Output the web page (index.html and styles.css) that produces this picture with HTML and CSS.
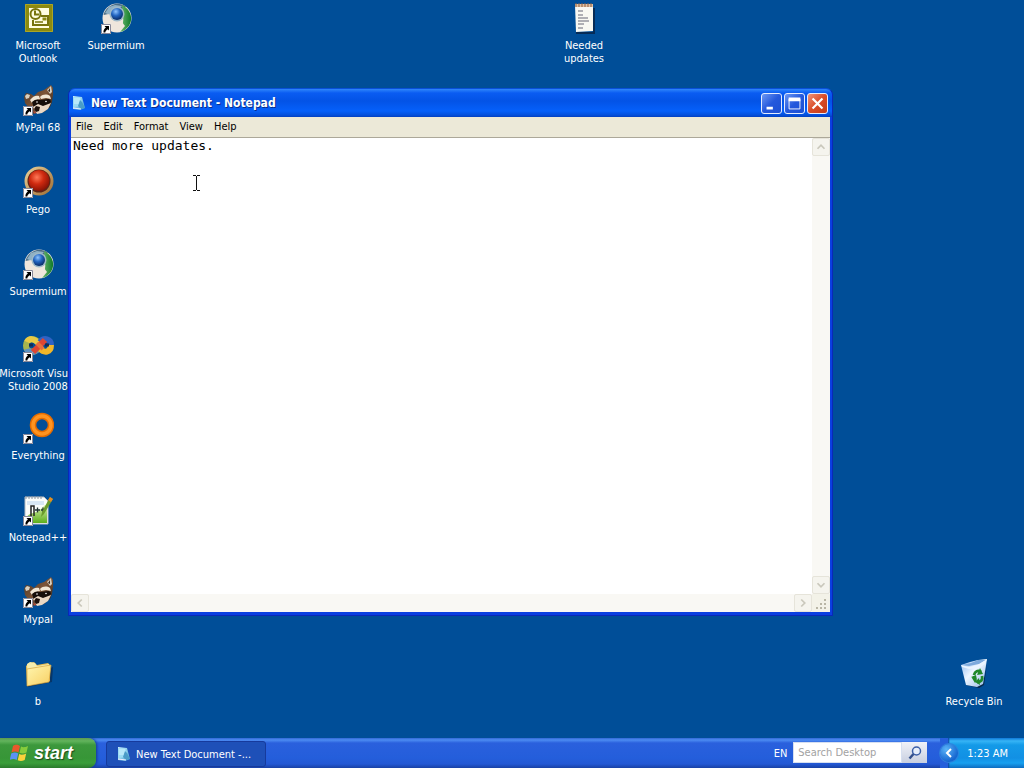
FILE: index.html
```html
<!DOCTYPE html>
<html lang="en">
<head>
<meta charset="utf-8">
<title>Desktop</title>
<link rel="stylesheet" href="styles.css">
</head>
<body>
<svg class="defs" aria-hidden="true">
  <defs>
    <radialGradient id="globe" cx=".4" cy=".3" r=".7"><stop offset="0" stop-color="#8fc4ff"/><stop offset=".5" stop-color="#2264c0"/><stop offset="1" stop-color="#0a2c68"/></radialGradient>
    <radialGradient id="red" cx=".4" cy=".35" r=".65"><stop offset="0" stop-color="#ff7a58"/><stop offset=".5" stop-color="#d02a10"/><stop offset="1" stop-color="#8c1406"/></radialGradient>
    <linearGradient id="gold" x2="1" y2="1"><stop offset="0" stop-color="#ecd49c"/><stop offset="1" stop-color="#9c6a30"/></linearGradient>
    <linearGradient id="green" x2="1"><stop offset="0" stop-color="#7cc47c"/><stop offset="1" stop-color="#0f7a28"/></linearGradient>
    <linearGradient id="folder" x2="1" y2="1"><stop offset="0" stop-color="#fff6b0"/><stop offset="1" stop-color="#f8cf62"/></linearGradient>
    <linearGradient id="bin" x2="1" y2="1"><stop offset="0" stop-color="#86b4ee"/><stop offset=".45" stop-color="#eef6ff"/><stop offset="1" stop-color="#8fb6e4"/></linearGradient>
    <linearGradient id="grass" x2="0" y2="1"><stop offset="0" stop-color="#e4f4b4"/><stop offset="1" stop-color="#5cae1c"/></linearGradient>
    <linearGradient id="note" x2="1" y2="1"><stop offset="0" stop-color="#d4f4ff"/><stop offset="1" stop-color="#3da0d4"/></linearGradient>
    <linearGradient id="fur" x2="1" y2="1"><stop offset="0" stop-color="#4a3424"/><stop offset=".5" stop-color="#7c5538"/><stop offset="1" stop-color="#24170f"/></linearGradient>
  </defs>
  <symbol id="shortcut" viewBox="0 0 10 10"><path d="M0 0h10v10H0z" fill="#fff"/><path d="M.5.5h9v9h-9z" fill="none" stroke="#889"/><path d="M3.500 2H8v4.500L6.700 5.200C5.200 6 4.500 7 4.300 8.500H2.500C2.200 6.500 3.200 4.800 4.900 3.500z"/></symbol>
  <symbol id="i-outlook" viewBox="0 0 32 32">
    <path d="M3 2h28v28H3z" fill="#8c8a10"/><path d="M7 6h20v20H7z" fill="#fffde0"/><path d="M3.500 2.500h27v27h-27z" fill="none" stroke="#aaa524"/>
    <g fill="none" stroke="#77740c" stroke-width="2"><circle cx="13.500" cy="12" r="5"/><path d="M13 8.500v4h4"/><path d="M19 14h7v9H11v-5"/></g><path d="M20.500 15.500h4v3h-4z" fill="#8c8a10"/><path d="M13 20h8" stroke="#77740c" stroke-width="1.500"/>
  </symbol>
  <symbol id="i-supermium" viewBox="0 0 32 32">
    <circle cx="17" cy="16" r="14.500" fill="#efe6de"/><path d="M3.500 13A14.500 14.500 0 0 1 26 4.500L18 10z" fill="#4a6c84"/><path d="M5 11l4-6 6-2 7 1-5 5-7 4z" fill="#8fb0c4"/>
    <path d="M22 3C32 8 34 19 27 26c-3 3-6 4-9 4 4-5 6-9 5-15z" fill="url(#green)"/><path d="M3 17c3-6 12-6 16-1l6 8-5 6C10 31 3 25 3 17z" fill="#efe6dc"/>
    <circle cx="17" cy="12" r="7.500" fill="#9db8c8"/><circle cx="17" cy="12" r="6" fill="url(#globe)"/>
  </symbol>
  <symbol id="i-raccoon" viewBox="0 0 32 32">
    <path d="M2 13l2-4 5 1 3 2 4-4 6-2 7-5 2 3v7l-1 7-2 5-6 5-7 1-5 1-4-7-3-4z" fill="url(#fur)"/>
    <path d="M3 12l2-2 3 1-1 3-3 1zM25 6l4-4 1 6-2 2z" fill="#d8d0c0"/><path d="M26 7l2-3v4z" fill="#3a2a1e"/>
    <path d="M8 16c3-4 6-5 9-4l1 3-4 1-4 3zM18 13c3-3 7-3 10-1l1 3-5-1-5 1z" fill="#f1e6d4"/>
    <path d="M10 18c3-3 6-3 8-2l9-1 2 2-2 4-6 1-4 1-5 1z" fill="#160e0a"/>
    <path d="M11 23l5-3 5 2 8-3-3 6-6 4-5 1z" fill="#ead8c4"/><path d="M14 22l4 1-1 4-3 1-2-3z" fill="#1c100c"/><path d="M11 27l3 1-1 2z" fill="#c04c3c"/><circle cx="15" cy="18" r=".8" fill="#fff"/><circle cx="24" cy="17.500" r=".8" fill="#fff"/>
  </symbol>
  <symbol id="i-pego" viewBox="0 0 32 32"><circle cx="17" cy="15" r="14.500" fill="url(#gold)"/><circle cx="17" cy="15" r="11.500" fill="#5d2417"/><circle cx="17" cy="14.500" r="10.500" fill="url(#red)"/></symbol>
  <symbol id="i-vs" viewBox="0 0 32 32">
    <g fill="none" stroke-width="6" transform="translate(0 3)"><path d="M17 10C12 4 4 6 4 12.500S12 21 17 15" stroke="#a7b54e"/><path d="M5 9c2-4 7-4 11 1" stroke="#e8ca45"/><path d="M5 16c1 4 7 4 11 0" stroke="#5d92c0"/><path d="M18 9C22 4 29 6 29 12" stroke="#2f62c4"/><path d="M29 12C29 20 22 20 18 16" stroke="#f1b72a"/><path d="M11 19L23 7" stroke="#dc4634"/><path d="M15 10l6 6" stroke="#e8703c" stroke-width="4"/></g>
    <path d="M7 15h4M23 15h4" stroke="#142a54" stroke-width="3"/>
  </symbol>
  <symbol id="i-every" viewBox="0 0 32 32"><circle cx="20" cy="13" r="9" fill="none" stroke="#e56c00" stroke-width="6.500"/><circle cx="20" cy="13" r="9" fill="none" stroke="#ff9420" stroke-width="3.500"/></symbol>
  <symbol id="i-npp" viewBox="0 0 32 32">
    <path d="M3 3h19l4 4v23H3z" fill="#fbfdfb" stroke="#b4bcc4"/><path d="M4 2v3m3-3v3m3-3v3m3-3v3m3-3v3m3-3v3" stroke="#8a94a0"/><path d="M5 8h17M5 10h17" stroke="#b8d2ee"/><path d="M4 24c4-6 7-4 12-7s6-6 9-7v19H4z" fill="url(#grass)"/>
    <path d="M9 22V12h3v10" fill="none" stroke="#222" stroke-width="1.500"/><path d="M13 16h5m-2.500-2.500v5M19 16h4m-2-2.500v5" stroke="#233" stroke-width="1.300"/><path d="M28 3l3 2-9 15-3 3 1-5z" fill="#6b9c2c"/><path d="M28 3l3 2-2 3-3-2z" fill="#e58a24"/>
  </symbol>
  <symbol id="i-folder" viewBox="0 0 32 32"><path d="M6 29l24-5 1-15-3 1v13L5 28z" fill="#092c55" opacity=".7"/><path d="M4 8l3-3 5-1 3 3 11-2 2 2v16L5 28z" fill="#e5bb54"/><path d="M5 6l3-2 5 1 2 3 12-2v16L6 27z" fill="#f4edad"/><path d="M5 11l24-4-2 17-22 4z" fill="url(#folder)" stroke="#d5a33d" stroke-width=".7"/></symbol>
  <symbol id="i-text" viewBox="0 0 32 32"><path d="M8 31h18V6" fill="none" stroke="#062b56" stroke-width="2"/><path d="M7 3l18-1v27L8 30z" fill="#f8f8f2"/><path d="M7 2h18v3H7z" fill="#dfc0a4"/><path d="M8 1v4m3-4v4m3-4v4m3-4v4m3-4v4m3-4v4" stroke="#8f6040"/><path d="M10 9h5m-5 4h5m-5 3h10m-10 3h11m-11 3h6m-6 4h5" stroke="#667"/></symbol>
  <symbol id="i-bin" viewBox="0 0 32 32"><path d="M8 27l13 3 5-3 3-21-4 20z" fill="#06284d"/><path d="M3 7l9-3 8-2 9-1-4 25-6 3-11-2z" fill="url(#bin)"/><path d="M4 7l9-2 7-3 8 0-7 4-10 2z" fill="#7da9dc"/><path d="M3 7l8 2 9-2 9-6-2 5-6 4-10 1-7-2z" fill="#eaf4ff"/><g fill="none" stroke="#20882a" stroke-width="2.800"><path d="M16 17c1-4 4-5 7-3M24 18c1 4-1 6-5 6M15 19l3 5"/></g><path d="M22 10l3 6-6 1zM13 19l5-2 1 5zM21 20l-4 4 5 3z" fill="#20882a"/></symbol>
  <symbol id="i-note" viewBox="0 0 16 16"><path d="M2 1l9 1 3 11-5 2-7-1z" fill="url(#note)"/><path d="M2 2l8 1 1 8-9 1z" fill="#9bdcf4"/><path d="M3 4h6M3 6h6M3 8h5" stroke="#d4f4ff"/><path d="M9 5l2 2 3 6-4 1-3-3z" fill="#4a9cc8"/><path d="M2 13l8 1" stroke="#eef"/></symbol>
</svg>

<div class="screen">
  <main class="desktop">
    <div class="icons">
      <button class="icon"><span class="art"><svg class="pic"><use href="#i-outlook"/></svg></span><span>Microsoft<br>Outlook</span></button>
      <button class="icon col-2"><span class="art"><svg class="pic"><use href="#i-supermium"/></svg><svg class="arrow"><use href="#shortcut"/></svg></span><span>Supermium</span></button>
      <button class="icon col-8"><span class="art"><svg class="pic"><use href="#i-text"/></svg></span><span>Needed<br>updates</span></button>
      <button class="icon row-2"><span class="art"><svg class="pic"><use href="#i-raccoon"/></svg><svg class="arrow"><use href="#shortcut"/></svg></span><span>MyPal 68</span></button>
      <button class="icon row-3"><span class="art"><svg class="pic"><use href="#i-pego"/></svg><svg class="arrow"><use href="#shortcut"/></svg></span><span>Pego</span></button>
      <button class="icon row-4"><span class="art"><svg class="pic"><use href="#i-supermium"/></svg><svg class="arrow"><use href="#shortcut"/></svg></span><span>Supermium</span></button>
      <button class="icon row-5"><span class="art"><svg class="pic"><use href="#i-vs"/></svg><svg class="arrow"><use href="#shortcut"/></svg></span><span>Microsoft Visual<br>Studio 2008</span></button>
      <button class="icon row-6"><span class="art"><svg class="pic"><use href="#i-every"/></svg><svg class="arrow"><use href="#shortcut"/></svg></span><span>Everything</span></button>
      <button class="icon row-7"><span class="art"><svg class="pic"><use href="#i-npp"/></svg><svg class="arrow"><use href="#shortcut"/></svg></span><span>Notepad++</span></button>
      <button class="icon row-8"><span class="art"><svg class="pic"><use href="#i-raccoon"/></svg><svg class="arrow"><use href="#shortcut"/></svg></span><span>Mypal</span></button>
      <button class="icon row-9"><span class="art"><svg class="pic"><use href="#i-folder"/></svg></span><span>b</span></button>
      <button class="icon row-9 col-13"><span class="art"><svg class="pic"><use href="#i-bin"/></svg></span><span>Recycle Bin</span></button>
    </div>

    <section class="window" aria-label="Notepad">
      <header class="titlebar">
        <svg class="small-icon"><use href="#i-note"/></svg>
        <h1 class="title">New Text Document - Notepad</h1>
        <button class="caption" aria-label="Minimize"><svg viewBox="0 0 21 21"><path d="M5 14h7v3H5z" fill="#fff"/></svg></button>
        <button class="caption" aria-label="Maximize"><svg viewBox="0 0 21 21"><path d="M4.500 5.500h12v11h-12z" fill="none" stroke="#fff"/><path d="M4 4h13v4H4z" fill="#fff"/></svg></button>
        <button class="caption close" aria-label="Close"><svg viewBox="0 0 21 21"><path d="M5 5l11 11m0-11L5 16" stroke="#fff" stroke-width="2.400"/></svg></button>
      </header>
      <div class="frame">
        <nav class="menubar"><button>File</button><button>Edit</button><button>Format</button><button>View</button><button>Help</button></nav>
        <div class="editor">
          <textarea class="text" aria-label="Document text" spellcheck="false">Need more updates.</textarea>
          <div class="vscroll">
            <button aria-label="Scroll up"><svg viewBox="0 0 16 16"><path d="M4 10l4-4 4 4"/></svg></button>
            <button aria-label="Scroll down"><svg viewBox="0 0 16 16"><path d="M4 6l4 4 4-4"/></svg></button>
          </div>
          <div class="hscroll">
            <button aria-label="Scroll left"><svg viewBox="0 0 16 16"><path d="M10 4L6 8l4 4"/></svg></button>
            <button aria-label="Scroll right"><svg viewBox="0 0 16 16"><path d="M6 4l4 4-4 4"/></svg></button>
          </div>
          <svg class="grip" viewBox="0 0 18 18"><path d="M12 5h2v2h-2zM8 9h2v2H8zM12 9h2v2h-2zM4 13h2v2H4zM8 13h2v2H8zM12 13h2v2h-2z" fill="#b9b6a6"/></svg>
        </div>
      </div>
    </section>
    <svg class="cursor" viewBox="0 0 9 18" aria-hidden="true"><path d="M1 1.500h3M5 1.500h3M4.500 2v14M1 16.500h3M5 16.500h3" stroke="#111" fill="none"/></svg>
  </main>

  <footer class="taskbar">
    <button class="start"><svg class="flag" viewBox="0 0 20 20"><path d="M3 3c3-2 5-1 7 0L8.500 9.500c-2-1-4-1.500-7 0z" fill="#e8582c"/><path d="M11 3.500c2 1 4 1 7-.5l-1.500 6.500c-3 1.500-5 1-7 .3z" fill="#86cc3c"/><path d="M1.200 10.500c3-1.500 5-1 7 0l-1.500 6.500c-2-1-4-1.500-7 0z" fill="#5a92f4"/><path d="M9.200 11c2 1 4 1 7-.5L14.700 17c-3 1.500-5 1-7 .3z" fill="#fbd23c"/></svg><span>start</span></button>
    <button class="task"><svg class="small-icon"><use href="#i-note"/></svg><span>New Text Document -...</span></button>
    <span class="lang">EN</span>
    <form class="search">
      <input type="text" placeholder="Search Desktop" aria-label="Search Desktop">
      <button type="button" aria-label="Search"><svg viewBox="0 0 16 16"><circle cx="9.500" cy="6" r="4" fill="#e6eefb" stroke="#3b5fa8" stroke-width="1.500"/><path d="M6.500 9l-4 4.500" stroke="#34508c" stroke-width="2.500"/></svg></button>
    </form>
    <div class="tray">
      <button class="expand" aria-label="Show hidden icons"><svg viewBox="0 0 18 18"><path d="M11 5L7 9l4 4" fill="none" stroke="#fff" stroke-width="2"/></svg></button>
      <time>1:23 AM</time>
    </div>
  </footer>
</div>
</body>
</html>
```
FILE: styles.css
```css
* { box-sizing: border-box; }
body {
  margin: 0;
  font: 11px/13px "DejaVu Sans Condensed", "DejaVu Sans", sans-serif;
}
button, input { font: inherit; color: inherit; border: 0; padding: 0; margin: 0; background: none; }
svg { display: block; flex: none; }
.defs { position: absolute; width: 0; height: 0; }
.screen { height: 100vh; display: flex; flex-direction: column; overflow: hidden; background: #004e98; }

.desktop { position: relative; flex: 1; min-height: 0; }
.icons { display: grid; grid-template-columns: repeat(13, 76px); grid-auto-rows: 82px; column-gap: 2px; }
.icon {
  grid-column: 1; grid-row: 1;
  display: flex; flex-direction: column; align-items: center; justify-content: flex-start; gap: 5px;
  padding-top: 2px; color: #fff; white-space: nowrap;
}
.col-2 { grid-column: 2; }
.col-8 { grid-column: 8; }
.col-13 { grid-column: 13; }
.row-2 { grid-row: 2; }
.row-3 { grid-row: 3; }
.row-4 { grid-row: 4; }
.row-5 { grid-row: 5; }
.row-6 { grid-row: 6; }
.row-7 { grid-row: 7; }
.row-8 { grid-row: 8; }
.row-9 { grid-row: 9; }
.art { position: relative; }
.pic { width: 32px; height: 32px; }
.arrow { position: absolute; left: 1px; bottom: 0; width: 10px; height: 10px; }

.window {
  position: absolute; left: 68px; top: 88px; width: 765px; height: 528px;
  display: flex; flex-direction: column;
  background: #0a3fe0; border: 1px solid #0a28b8; border-top-color: #0a50d8;
  border-radius: 7px 7px 0 0; overflow: hidden;
}
.titlebar {
  display: flex; align-items: center; gap: 2px; height: 28px; padding: 0 4px 0 2px;
  background: linear-gradient(#2f86fb 0, #0a5cf2 4px, #0353e6 12px, #0560fa 22px, #0450dc 26px, #0340c0);
}
.small-icon { width: 16px; height: 16px; }
.title { flex: 1; margin: 0; padding-left: 2px; font: bold 12px/16px "DejaVu Sans Condensed", "DejaVu Sans", sans-serif; color: #fff; text-shadow: 1px 1px #0a2f8c; }
.caption { width: 21px; height: 21px; border: 1px solid #e4ecff; border-radius: 3px; background: linear-gradient(135deg, #6c98f4, #2458dc 50%, #1c50d4); }
.caption svg { width: 19px; height: 19px; }
.close { background: linear-gradient(135deg, #ee9478, #da4c28 50%, #c43c18); }
.frame { flex: 1; min-height: 0; display: flex; flex-direction: column; margin: 0 2px 3px; background: #fff; }
.menubar { display: flex; gap: 1px; height: 21px; background: #ece9d8; border-bottom: 1px solid #aca899; }
.menubar button { padding: 0 5px 2px; }
.editor { flex: 1; min-height: 0; display: grid; grid-template: 1fr 18px / 1fr 18px; }
.text { width: 100%; height: 100%; border: 0; outline: 0; resize: none; overflow: hidden; padding: 1px 2px; background: #fff; color: #000; font: 13px/14px "DejaVu Sans Mono", monospace; }
.vscroll, .hscroll { display: flex; justify-content: space-between; background: #f9f8f4; }
.vscroll { flex-direction: column; }
.editor button { width: 18px; height: 18px; padding: 1px; border: 1px solid #e6e4da; border-radius: 2px; background: #f5f4ee; }
.editor button svg { width: 14px; height: 14px; fill: none; stroke: #cac8bc; stroke-width: 2; }
.grip { width: 18px; height: 18px; background: #f3f2e8; }
.cursor { position: absolute; left: 192px; top: 174px; width: 9px; height: 18px; }

.taskbar {
  display: flex; align-items: stretch; height: 30px; color: #fff;
  background: linear-gradient(#3168d5 0, #4c8cf2 2px, #2a60dd 5px, #245edb 20px, #2358d4 26px, #1941a5);
}
.start {
  display: flex; align-items: center; gap: 4px; width: 96px; padding: 0 0 0 10px;
  font: italic bold 18px/20px "Liberation Sans", Arial, sans-serif; color: #fff; text-shadow: 1px 1px 1px #1c4a1c;
  border-radius: 0 8px 8px 0; box-shadow: 1px 0 3px #123a90;
  background: linear-gradient(#5a9a52 0, #62b45c 3px, #3c983c 7px, #379637 20px, #3a9e3a 25px, #2a7a2c);
}
.flag { width: 20px; height: 20px; }
.task {
  display: flex; align-items: center; gap: 4px; width: 160px; margin: 3px 0 1px 10px; padding: 0 9px;
  white-space: nowrap; color: #fff; border: 1px solid #163a9c; border-radius: 3px; background: #1e50b8;
}
.lang { align-self: center; margin-left: auto; padding-right: 6px; }
.search { display: flex; align-items: stretch; width: 134px; height: 21px; margin: 4px 13px 0 0; }
.search input { flex: 1; min-width: 0; padding: 0 4px; background: #fff; border: 1px solid #d6dff0; color: #333; }
.search input::placeholder { color: #a2a2a2; opacity: 1; }
.search button { display: flex; align-items: center; justify-content: center; width: 25px; background: linear-gradient(#f0f2f8, #c8cfe0); }
.search svg { width: 16px; height: 16px; }
.tray {
  display: flex; align-items: center; gap: 9px; padding-right: 16px;
  background:
    linear-gradient(90deg, #245edb 8px, #0c3f9c 8px, transparent 10px),
    linear-gradient(#0f78d8 0, #36b4f6 3px, #149ae8 7px, #1290e4 20px, #18a0f0 25px, #0d6cc0);
}
.expand { width: 18px; height: 18px; border-radius: 50%; background: radial-gradient(circle at 35% 30%, #5ab4f8, #1666d0 70%); box-shadow: 0 0 0 1px #2f80dc; }
```
